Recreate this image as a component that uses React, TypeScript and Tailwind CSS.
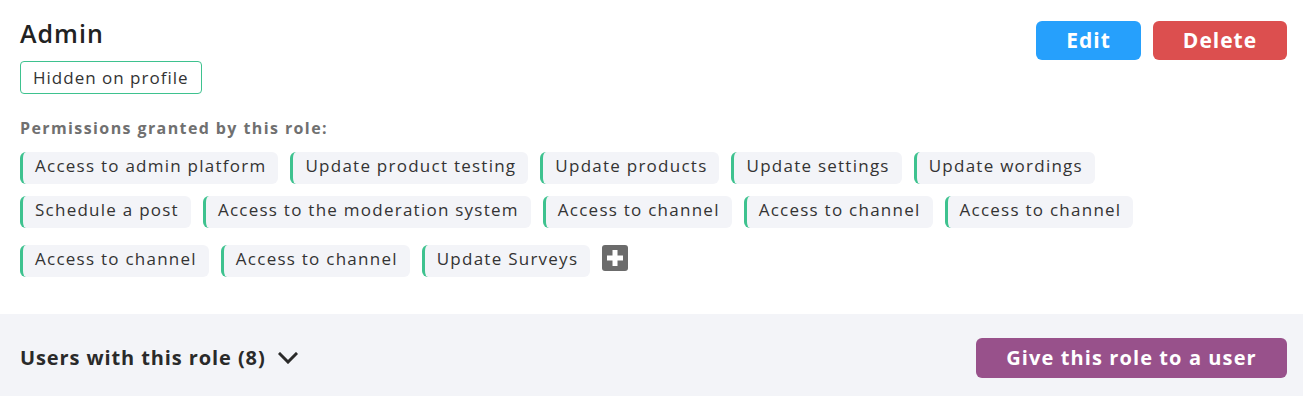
import React from "react";

const rows: string[][] = [
  ["Access to admin platform", "Update product testing", "Update products", "Update settings", "Update wordings"],
  ["Schedule a post", "Access to the moderation system", "Access to channel", "Access to channel", "Access to channel"],
  ["Access to channel", "Access to channel", "Update Surveys"],
];

function Chip({ label }: { label: string }) {
  return (
    <div className="rounded-[6px] border-l-[3px] border-[#3ec28f] bg-[#f3f4f8] px-3 pb-[4px] text-[17px] leading-[28px] text-[#333333] tracking-[1.25px] whitespace-nowrap">
      {label}
    </div>
  );
}

function PlusSquare() {
  return (
    <svg width="26" height="26" viewBox="0 0 26 26" className="block">
      <rect x="0" y="0" width="26" height="26" rx="3" fill="#6b6b6b" />
      <rect x="5" y="10.5" width="16" height="5" fill="#ffffff" />
      <rect x="10.5" y="5" width="5" height="16" fill="#ffffff" />
    </svg>
  );
}

export default function App() {
  return (
    <div className="w-[1303px] bg-white font-['Open_Sans',sans-serif] text-[#333333]">
      <div className="pl-5 pr-4 pt-[18px] pb-[37px]">
        <div className="flex items-start justify-between">
          <div className="flex flex-col items-start">
            <h1 className="text-[25px] font-semibold leading-[31px] tracking-[1px] text-[#222222]">Admin</h1>
            <div className="mt-[12px] flex h-[33px] items-center rounded-[4px] border border-[#3ec28f] px-3 text-[17px] tracking-[1px] text-[#333333]">
              Hidden on profile
            </div>
          </div>
          <div className="mt-[3px] flex gap-3">
            <button className="flex h-[39px] w-[105px] items-center justify-center rounded-[6px] bg-[#26a0fc] text-[21px] font-bold tracking-[1px] text-white">
              Edit
            </button>
            <button className="flex h-[39px] w-[134px] items-center justify-center rounded-[6px] bg-[#dc4f4f] text-[21px] font-bold tracking-[1px] text-white">
              Delete
            </button>
          </div>
        </div>
        <div className="mt-[24px] text-[16px] font-bold leading-[20px] tracking-[1.4px] text-[#707070]">
          Permissions granted by this role:
        </div>
        <div className="mt-[14px] flex gap-3">
          {rows[0].map((l, i) => (
            <Chip key={i} label={l} />
          ))}
        </div>
        <div className="mt-3 flex gap-3">
          {rows[1].map((l, i) => (
            <Chip key={i} label={l} />
          ))}
        </div>
        <div className="mt-[17px] flex items-start gap-3">
          {rows[2].map((l, i) => (
            <Chip key={i} label={l} />
          ))}
          <PlusSquare />
        </div>
      </div>
      <div className="flex items-center justify-between bg-[#f3f4f8] pl-5 pr-4 py-6">
        <div className="flex items-center">
          <span className="text-[20px] font-bold tracking-[0.9px] text-[#2a2a2a]">Users with this role (8)</span>
          <svg width="20" height="12" viewBox="0 0 20 12" className="ml-3">
            <polyline points="2,2 10,10 18,2" fill="none" stroke="#2a2a2a" strokeWidth="3" strokeLinecap="square" />
          </svg>
        </div>
        <button className="flex h-[40px] w-[311px] items-center justify-center rounded-[6px] bg-[#98518b] text-[20px] font-bold tracking-[1.1px] text-white">
          Give this role to a user
        </button>
      </div>
    </div>
  );
}
